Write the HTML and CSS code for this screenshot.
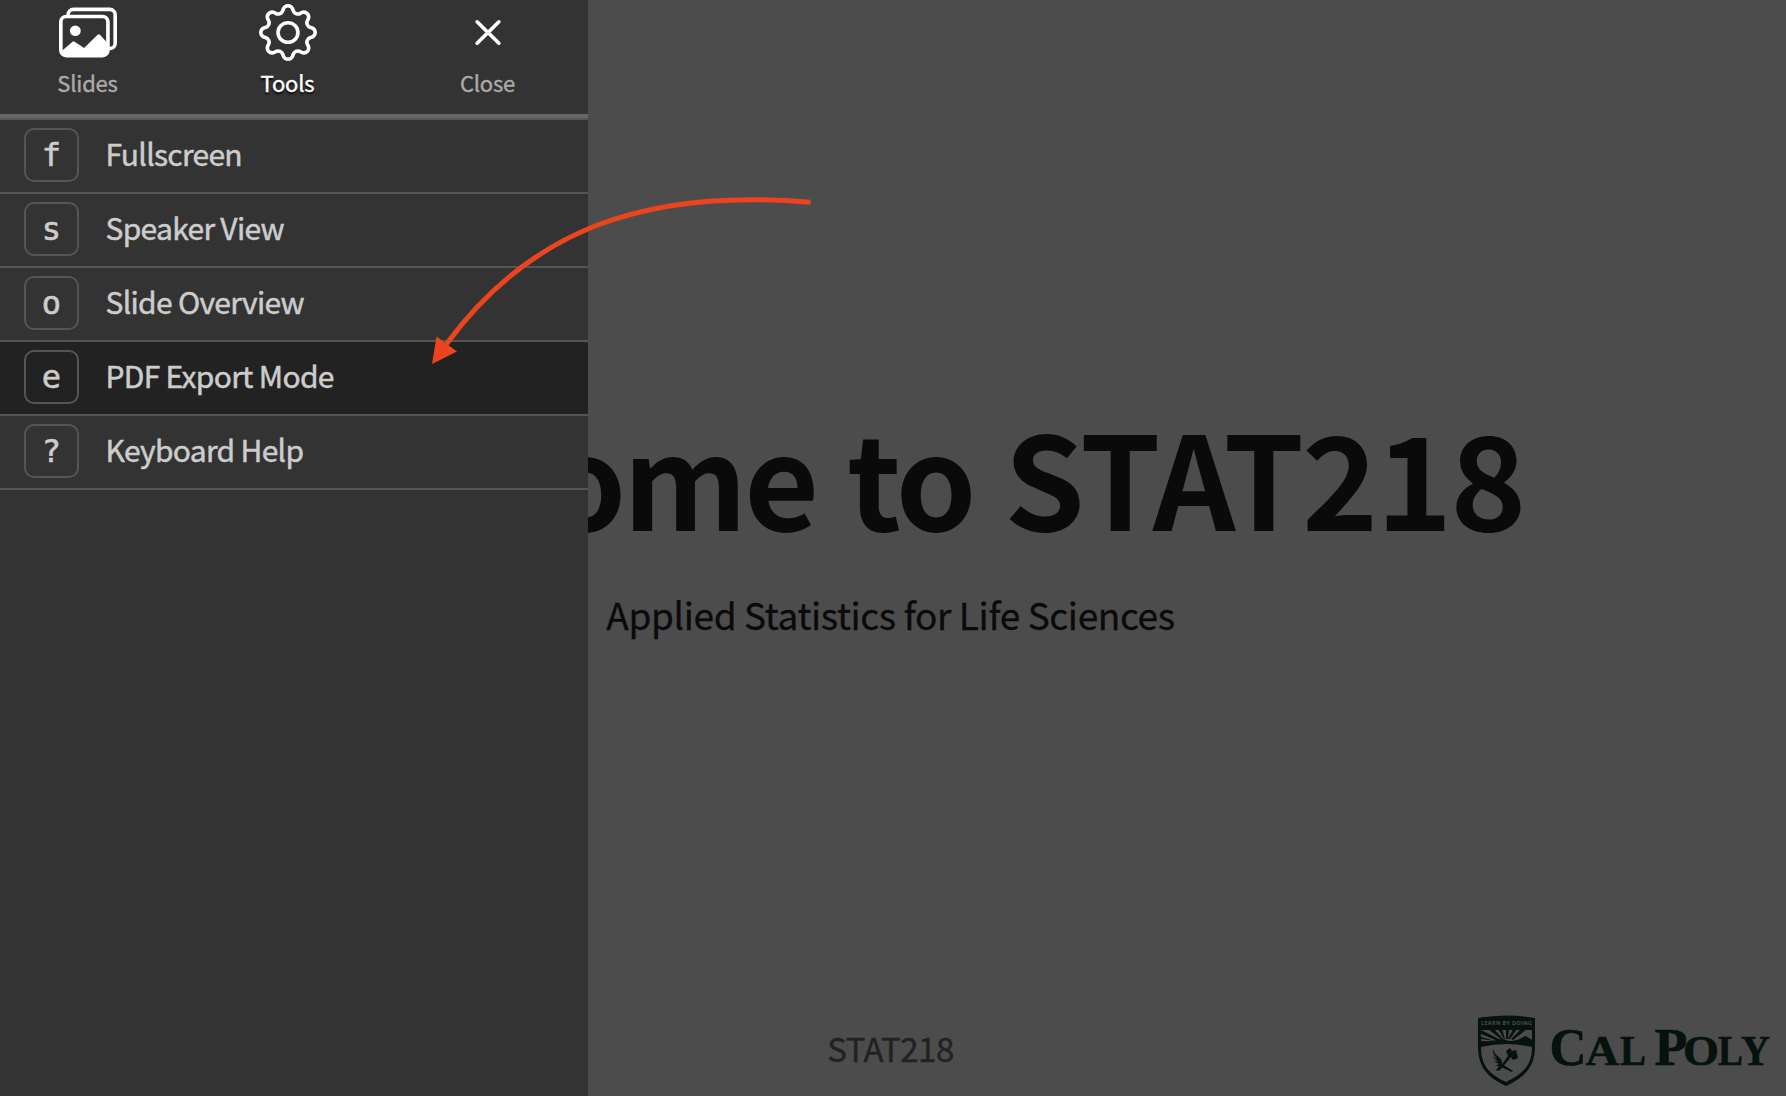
FILE: index.html
```html
<!DOCTYPE html>
<html lang="en">
<head>
<meta charset="utf-8">
<title>Welcome to STAT218</title>
<link rel="stylesheet" href="styles.css">
</head>
<body>
<main class="slide">
  <section class="hero">
    <h1 class="title">Welcome to <span class="course">STAT218</span></h1>
    <p class="subtitle">Applied Statistics for Life Sciences</p>
  </section>
  <footer class="footer">STAT218</footer>
  <svg class="logo" width="296" height="76" viewBox="0 0 296 76" role="img" aria-label="Cal Poly">
    <path class="ink" fill-rule="evenodd" d="M0 4Q28-1 57 4V32C57 53 47 63 28 72C9 63 0 53 0 32ZM3 16V27Q12 28 19 26L25 25L31 27Q40 27 45 23L48 22L54 26V16ZM3 33V34C3 51 11 60 28 68C45 60 54 51 54 34V33Q28 27 3 33Z"/>
    <path class="ink" d="M23 26L3 16V20L20 27ZM24 26L10 15H16L25 25ZM26 25L20 15H24L27 25ZM28 25L28 15H31L30 25ZM30 25L35 15H39L32 25ZM33 25L43 15H49L35 26ZM3 25L17 27L3 23Z"/>
    <path class="ink" d="M15 35Q17 41 22 44Q25 48 24 50L35 57L34 58L23 53L19 57L18 56L21 52L17 52L21 50L15 47L20 48L14 42L19 45Q14 39 15 35ZM28 37L32 34L34 37L38 36L40 44L35 46L33 43L23 55L21 57L20 56L30 42Z"/>
    <text class="motto" x="3" y="10.500" textLength="51">LEARN BY DOING</text>
    <g class="wordmark">
      <text class="big" x="71.500" y="51" textLength="37" lengthAdjust="spacingAndGlyphs">C</text>
      <text class="small" x="107.500" y="51" textLength="33.500" lengthAdjust="spacingAndGlyphs">A</text>
      <text class="small" x="142" y="51" textLength="26" lengthAdjust="spacingAndGlyphs">L</text>
      <text class="big" x="176.500" y="51" textLength="33" lengthAdjust="spacingAndGlyphs">P</text>
      <text class="small" x="205" y="51" textLength="36" lengthAdjust="spacingAndGlyphs">O</text>
      <text class="small" x="240" y="51" textLength="25" lengthAdjust="spacingAndGlyphs">L</text>
      <text class="small" x="263" y="51" textLength="29" lengthAdjust="spacingAndGlyphs">Y</text>
    </g>
  </svg>
</main>
<nav class="menu">
  <ul class="toolbar">
    <li class="tab">
      <svg class="icon" viewBox="0 0 16 16" preserveAspectRatio="none"><path d="M4.502 9a1.5 1.5 0 1 0 0-3 1.5 1.5 0 0 0 0 3z"/><path d="M14.002 13a2 2 0 0 1-2 2h-10a2 2 0 0 1-2-2V5A2 2 0 0 1 2 3a2 2 0 0 1 2-2h10a2 2 0 0 1 2 2v8a2 2 0 0 1-1.998 2zM14 2H4a1 1 0 0 0-1 1h9.002a2 2 0 0 1 2 2v7A1 1 0 0 0 15 11V3a1 1 0 0 0-1-1zM2.002 4a1 1 0 0 0-1 1v8l2.646-2.354a.5.5 0 0 1 .63-.062l2.66 1.773 3.71-3.71a.5.5 0 0 1 .577-.094l1.777 1.947V5a1 1 0 0 0-1-1h-10z"/></svg>
      <span class="tab-label">Slides</span>
    </li>
    <li class="tab active">
      <svg class="icon" viewBox="0 0 16 16" preserveAspectRatio="none"><path d="M8 4.754a3.246 3.246 0 1 0 0 6.492 3.246 3.246 0 0 0 0-6.492zM5.754 8a2.246 2.246 0 1 1 4.492 0 2.246 2.246 0 0 1-4.492 0z"/><path d="M9.796 1.343c-.527-1.79-3.065-1.79-3.592 0l-.094.319a.873.873 0 0 1-1.255.52l-.292-.16c-1.64-.892-3.433.902-2.54 2.541l.159.292a.873.873 0 0 1-.52 1.255l-.319.094c-1.79.527-1.79 3.065 0 3.592l.319.094a.873.873 0 0 1 .52 1.255l-.16.292c-.892 1.64.901 3.434 2.541 2.54l.292-.159a.873.873 0 0 1 1.255.52l.094.319c.527 1.79 3.065 1.79 3.592 0l.094-.319a.873.873 0 0 1 1.255-.52l.292.16c1.64.893 3.434-.902 2.54-2.541l-.159-.292a.873.873 0 0 1 .52-1.255l.319-.094c1.79-.527 1.79-3.065 0-3.592l-.319-.094a.873.873 0 0 1-.52-1.255l.16-.292c.893-1.64-.902-3.433-2.541-2.54l-.292.159a.873.873 0 0 1-1.255-.52l-.094-.319zm-2.633.283c.246-.835 1.428-.835 1.674 0l.094.319a1.873 1.873 0 0 0 2.693 1.115l.291-.16c.764-.415 1.6.42 1.184 1.185l-.159.292a1.873 1.873 0 0 0 1.116 2.692l.318.094c.835.246.835 1.428 0 1.674l-.319.094a1.873 1.873 0 0 0-1.115 2.693l.16.291c.415.764-.42 1.6-1.185 1.184l-.291-.159a1.873 1.873 0 0 0-2.693 1.116l-.094.318c-.246.835-1.428.835-1.674 0l-.094-.319a1.873 1.873 0 0 0-2.692-1.115l-.292.16c-.764.415-1.6-.42-1.184-1.185l.159-.291A1.873 1.873 0 0 0 1.945 8.93l-.319-.094c-.835-.246-.835-1.428 0-1.674l.319-.094A1.873 1.873 0 0 0 3.06 4.377l-.16-.292c-.415-.764.42-1.6 1.185-1.184l.292.159a1.873 1.873 0 0 0 2.692-1.115l.094-.319z"/></svg>
      <span class="tab-label">Tools</span>
    </li>
    <li class="tab">
      <svg class="icon" viewBox="0 0 16 16" preserveAspectRatio="none"><path d="M4.646 4.646a.5.5 0 0 1 .708 0L8 7.293l2.646-2.647a.5.5 0 0 1 .708.708L8.707 8l2.647 2.646a.5.5 0 0 1-.708.708L8 8.707l-2.646 2.647a.5.5 0 0 1-.708-.708L7.293 8 4.646 5.354a.5.5 0 0 1 0-.708z"/></svg>
      <span class="tab-label">Close</span>
    </li>
  </ul>
  <ul class="items">
    <li class="item"><kbd class="key">f</kbd><span class="item-label">Fullscreen</span></li>
    <li class="item"><kbd class="key">s</kbd><span class="item-label">Speaker View</span></li>
    <li class="item"><kbd class="key">o</kbd><span class="item-label">Slide Overview</span></li>
    <li class="item selected"><kbd class="key">e</kbd><span class="item-label">PDF Export Mode</span></li>
    <li class="item"><kbd class="key">?</kbd><span class="item-label">Keyboard Help</span></li>
  </ul>
</nav>
<svg class="arrow" width="430" height="200" viewBox="0 0 430 200">
  <path class="arrow-line" d="M410.500 22.300C245 8 130 50 46.500 164"/>
  <path class="arrow-head" d="M32 184L36.500 156.500L57 171.500Z"/>
</svg>
</body>
</html>
```

FILE: styles.css
```css
* { box-sizing: border-box; }

body {
  margin: 0;
  width: 1786px;
  height: 1096px;
  overflow: hidden;
  position: relative;
  background: #4c4c4c;
  font-family: "Noto Sans CJK SC", "Noto Sans", sans-serif;
}

ul { list-style: none; margin: 0; padding: 0; }

.slide {
  height: 1096px;
  padding-right: 5px;
  display: flex;
  flex-direction: column;
  text-align: center;
  color: #0a0a0a;
}

.hero { flex: 1; padding-top: 395px; }

.title {
  margin: 0;
  padding-left: 4px;
  font-size: 129px;
  line-height: 160px;
  font-weight: 700;
  letter-spacing: -3.2px;
  word-spacing: 5px;
  white-space: nowrap;
}

.course { letter-spacing: -2px; }

.subtitle {
  margin: 29px 0 0;
  font-size: 37px;
  line-height: 60px;
  letter-spacing: -0.37px;
  -webkit-text-stroke: 0.3px;
}

.footer {
  height: 76px;
  font-size: 33px;
  line-height: 56px;
  letter-spacing: -0.5px;
  color: #222;
  -webkit-text-stroke: 0.4px;
}

.logo { position: absolute; left: 1478px; top: 1014px; overflow: visible; }
.ink, .wordmark { fill: #06120c; }
.motto { font: 700 5.5px "Open Sans", sans-serif; fill: #4c4c4c; }
.wordmark {
  font-family: "Liberation Serif", serif;
  font-weight: 700;
  stroke: #06120c;
  stroke-width: 0.6;
}
.big { font-size: 52px; }
.small { font-size: 43px; }

.menu {
  position: absolute;
  left: 0;
  top: 0;
  width: 588px;
  height: 1096px;
  background: #333;
}

.toolbar {
  height: 118px;
  display: flex;
  gap: 25px;
  padding: 4px 0 0;
  border-bottom: 4px solid #666;
}

.tab {
  width: 175px;
  display: flex;
  flex-direction: column;
  align-items: center;
  color: #aaa;
}

.active { color: #fff; text-shadow: 0 2px 2px #000; }
.icon { width: 58px; height: 57px; fill: #fff; }
.tab-label {
  font-size: 22px;
  line-height: 30px;
  margin-top: 6px;
  letter-spacing: -0.2px;
  -webkit-text-stroke: 0.4px;
}

.items { border-top: 2px solid #555; }

.item {
  height: 74px;
  display: flex;
  align-items: flex-start;
  gap: 26.5px;
  padding: 8px 24px 0;
  border-bottom: 2px solid #555;
  color: #ccc;
}

.selected { background: #222; }

.key {
  width: 55px;
  height: 54px;
  border: 2px solid #555;
  border-radius: 10px;
  font: 32px/50px "DejaVu Sans Mono", monospace;
  text-align: center;
  -webkit-text-stroke: 0.6px;
}

.item-label {
  font-size: 30px;
  line-height: 40px;
  margin-top: 5px;
  letter-spacing: -0.7px;
  -webkit-text-stroke: 0.5px;
}

.arrow { position: absolute; left: 400px; top: 180px; }
.arrow-line { fill: none; stroke: #eb441e; stroke-width: 5; }
.arrow-head { fill: #eb441e; }
```
